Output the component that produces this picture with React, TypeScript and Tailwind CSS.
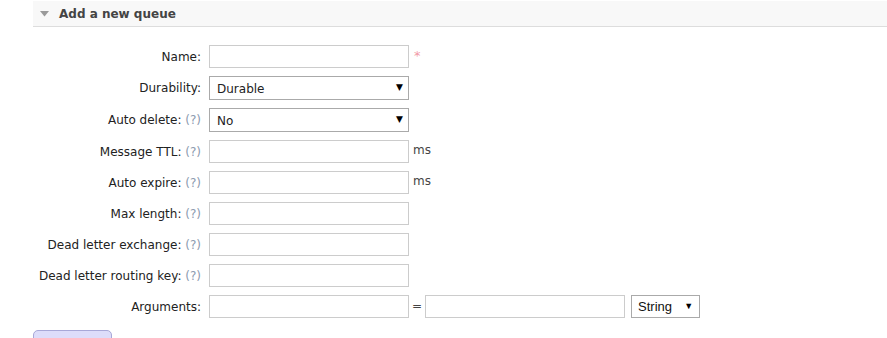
import React from "react";

const labelFont = { fontFamily: '"DejaVu Sans", Verdana, sans-serif' };

function Help() {
  return <span className="text-[#8c9bb0]"> (?)</span>;
}

function TextBox({ className = "w-[200px]" }: { className?: string }) {
  return <input type="text" className={`${className} h-[23px] border border-[#ccc] bg-white outline-none`} />;
}

function Dropdown({ value }: { value: string }) {
  return (
    <div className="w-[200px] h-[24px] border border-[#aaa] bg-white flex items-center justify-between pl-[7px] pr-[5px] text-[12px] text-[#222]">
      <span className="pt-[1px]">{value}</span>
      <span className="text-[9px] text-black">▼</span>
    </div>
  );
}

function Row({ label, help, children }: { label: string; help?: boolean; children: React.ReactNode }) {
  return (
    <div className="flex items-start">
      <div className="w-[168px] shrink-0 text-right text-[12px] text-[#222] leading-[23px] h-[23px] pt-[1px]">
        {label}:{help && <Help />}
      </div>
      <div className="ml-2 flex items-start">{children}</div>
    </div>
  );
}

export default function App() {
  return (
    <div className="w-[887px] h-[338px] overflow-hidden bg-white pl-[33px]" style={labelFont}>
      <div className="mt-[1px] h-[26px] bg-[#f8f8f8] border-b border-[#ddd] flex items-center pl-[7px]">
        <svg width="9" height="6" viewBox="0 0 9 6" className="mr-[10px]">
          <path d="M0 0 H9 L4.5 5.5 Z" fill="#9a9a9a" />
        </svg>
        <span className="text-[12px] font-bold text-[#444]">Add a new queue</span>
      </div>

      <div className="pt-[18px] flex flex-col gap-2">
        <Row label="Name">
          <TextBox />
          <span className="ml-[5px] mt-[4px] text-[13px] text-[#f29aa6] leading-none">*</span>
        </Row>
        <Row label="Durability">
          <Dropdown value="Durable" />
        </Row>
        <Row label="Auto delete" help>
          <Dropdown value="No" />
        </Row>
        <Row label="Message TTL" help>
          <TextBox />
          <span className="ml-[4px] text-[12px] text-[#444] leading-[21px]">ms</span>
        </Row>
        <Row label="Auto expire" help>
          <TextBox />
          <span className="ml-[4px] text-[12px] text-[#444] leading-[21px]">ms</span>
        </Row>
        <Row label="Max length" help>
          <TextBox />
        </Row>
        <Row label="Dead letter exchange" help>
          <TextBox />
        </Row>
        <Row label="Dead letter routing key" help>
          <TextBox />
        </Row>
        <Row label="Arguments">
          <TextBox />
          <span className="mx-[3px] text-[12px] text-[#444] leading-[23px]">=</span>
          <TextBox />
          <div
            className="ml-[6px] w-[69px] h-[23px] border border-[#aaa] bg-white flex items-center justify-between pl-[6px] pr-[6px] text-[13px] text-[#111]"
            style={{ fontFamily: '"Liberation Sans", Arial, sans-serif' }}
          >
            <span>String</span>
            <span className="text-[9px] text-black">▼</span>
          </div>
        </Row>
      </div>

      <div className="mt-[12px] w-[79px] h-[20px] rounded-[5px] border border-[#a8a8d8] bg-[#ddddfa]" />
    </div>
  );
}
